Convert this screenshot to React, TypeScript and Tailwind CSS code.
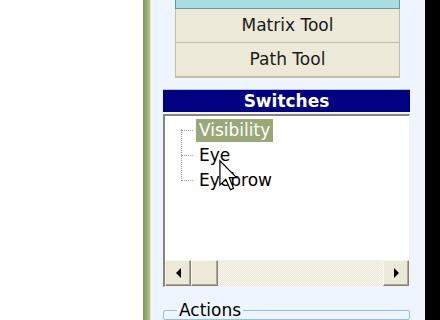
const TREE_ITEMS = ["Visibility", "Eye", "Eyebrow"];

function Arrow({ dir }: { dir: "left" | "right" }) {
  return (
    <svg aria-hidden="true" width="5" height="10" viewBox="0 0 5 10">
      {dir === "left" ? <polygon points="5,0 0,5 5,10" fill="#000" /> : <polygon points="0,0 5,5 0,10" fill="#000" />}
    </svg>
  );
}

function ScrollButton({ children, className = "" }: { children?: React.ReactNode; className?: string }) {
  return (
    <div className={`flex h-full items-center justify-center bg-[#ece9d8] border border-t-[#f6f5ee] border-l-[#f6f5ee] border-r-[#85826f] border-b-[#85826f] shadow-[inset_-1px_-1px_0_#aca899] ${className}`}>
      {children}
    </div>
  );
}

function Cursor() {
  return (
    <svg aria-hidden="true" className="absolute left-[219px] top-[159px]" width="20" height="34" viewBox="0 0 13 21">
      <path d="M0.6 0.6 L0.6 16.4 L4.4 12.6 L7.4 19.4 L9.4 18.5 L6.7 11.6 L11.4 11.6 Z" fill="#fff" stroke="#000" strokeWidth="0.8" strokeLinejoin="miter" />
    </svg>
  );
}

export default function App() {
  return (
    <div className="relative flex h-[320px] w-[440px] overflow-hidden bg-white font-['DejaVu_Sans',sans-serif]">
      {/* Left blank area */}
      <div className="w-[143px] bg-white" />

      {/* Green divider */}
      <div className="w-[7px] bg-gradient-to-r from-[#7e9a58] via-[#92ab6c] to-[#b3c798]" />
      <div className="w-px bg-[#dfe8d4]" />

      {/* Side panel */}
      <div className="flex w-[274px] flex-col bg-[#eef5fe]">
        {/* Tool buttons */}
        <div className="ml-[24px] mr-[25px] flex flex-col">
          <div className="h-[9px] border-x border-b border-[#5f9aa6] bg-[#a9dde2]" />
          <div className="flex h-[34px] items-center justify-center border-x border-b border-[#c2bea9] bg-[#ece9d8] text-[17px] text-[#1a1a1a]">
            Matrix Tool
          </div>
          <div className="flex h-[35px] items-center justify-center border-x border-b-2 border-[#c2bea9] bg-[#ece9d8] text-[17px] text-[#1a1a1a]">
            Path Tool
          </div>
        </div>

        {/* Switches */}
        <div className="ml-[12px] mr-[15px] mt-[11px] flex flex-col">
          <div className="flex h-[23px] items-center justify-center border-t border-[#b8c4d6] bg-[#000080] text-[17px] font-bold leading-none text-white">
            Switches
          </div>
          <div className="mt-[2px] flex h-[173px] flex-col border-l-2 border-t-2 border-b border-r border-l-[#898579] border-t-[#898579] border-b-[#f4f1e6] border-r-[#f4f1e6] bg-white">
            <div className="relative flex-1 pl-[31px] pt-[2px]">
              {/* Dotted connectors */}
              <div className="absolute left-[16px] top-[13px] h-[52px] border-l border-dotted border-[#a0a0a0]" />
              {TREE_ITEMS.map((label, i) => (
                <div key={label} className="relative flex h-[25px] items-center">
                  <div className="absolute left-[-15px] top-[12px] w-[12px] border-t border-dotted border-[#a0a0a0]" />
                  <span
                    className={
                      i === 0
                        ? "flex h-[23px] items-center bg-[#98a878] px-[3px] text-[17px] text-white"
                        : "px-[3px] text-[17px] text-black"
                    }
                  >
                    {label}
                  </span>
                </div>
              ))}
            </div>

            {/* Horizontal scrollbar */}
            <div className="flex h-[26px] items-stretch bg-[repeating-conic-gradient(#f7f5ec_0_25%,#ebe8da_0_50%)] bg-[length:2px_2px]">
              <ScrollButton className="w-[26px]">
                <Arrow dir="left" />
              </ScrollButton>
              <ScrollButton className="w-[27px]" />
              <div className="flex-1" />
              <ScrollButton className="w-[26px]">
                <Arrow dir="right" />
              </ScrollButton>
            </div>
          </div>
        </div>

        {/* Actions group */}
        <fieldset className="ml-[12px] mr-[15px] mt-[14px] h-[40px] rounded-[2px] border border-[#8dc0f0] px-[13px]">
          <legend className="px-[2px] text-[17px] leading-[18px] text-black">Actions</legend>
        </fieldset>
      </div>

      {/* Black edge */}
      <div className="flex-1 bg-black" />

      <Cursor />
    </div>
  );
}
